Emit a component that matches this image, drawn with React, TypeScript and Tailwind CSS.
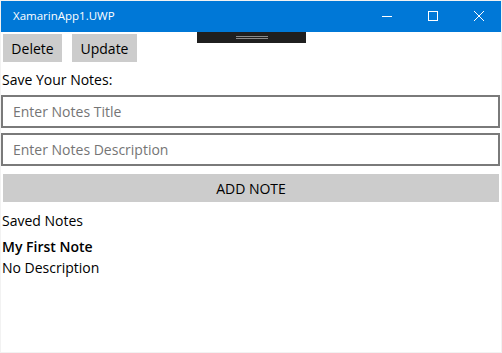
import React from 'react';

// タイトルバーのボタン
const TitleButtons: React.FC = () => (
  <div className="flex h-full">
    <div className="w-[46px] h-full flex items-center justify-center">
      <svg width="10" height="10" viewBox="0 0 10 10"><path d="M0 5.5h10" stroke="white" strokeWidth="1" /></svg>
    </div>
    <div className="w-[46px] h-full flex items-center justify-center">
      <svg width="10" height="10" viewBox="0 0 10 10"><rect x="0.5" y="0.5" width="9" height="9" fill="none" stroke="white" strokeWidth="1" /></svg>
    </div>
    <div className="w-[46px] h-full flex items-center justify-center">
      <svg width="10" height="10" viewBox="0 0 10 10"><path d="M0 0L10 10M10 0L0 10" stroke="white" strokeWidth="1" /></svg>
    </div>
  </div>
);

const App: React.FC = () => {
  return (
    <div
      className="w-[502px] h-[353px] bg-white border border-[#f2f2f2] relative overflow-hidden text-black"
      style={{ fontFamily: '"Segoe UI", "Open Sans", "Noto Sans", sans-serif' }}
    >
      {/* タイトルバー */}
      <div className="h-8 bg-[#0078d7] flex items-center justify-between pl-[13px] -mx-px -mt-px">
        <span className="text-white text-[11.5px]">XamarinApp1.UWP</span>
        <TitleButtons />
      </div>

      {/* ツールバー (デバッグ用) */}
      <div className="absolute left-[196px] top-[31px] w-[109px] h-[11px] bg-[#1f1f1f] flex items-center justify-center">
        <div className="w-8 h-[3px] border-y border-[#8a8a8a]" />
      </div>

      <div>
        <div className="flex gap-[10px] pl-[2px] pt-[2px]">
          <button className="h-7 w-[59px] bg-[#cccccc] text-[14px]">Delete</button>
          <button className="h-7 w-[65px] bg-[#cccccc] text-[14px]">Update</button>
        </div>

        <p className="text-[14px] mt-[8px] pl-[1px] leading-5">Save Your Notes:</p>

        <input
          className="mt-[5px] block w-[499px] h-[33px] border-2 border-[#7a7a7a] px-[10px] text-[14px] placeholder:text-[#757575] outline-none"
          placeholder="Enter Notes Title"
        />
        <input
          className="mt-[5px] block w-[499px] h-[33px] border-2 border-[#7a7a7a] px-[10px] text-[14px] placeholder:text-[#757575] outline-none"
          placeholder="Enter Notes Description"
        />

        <button className="mt-2 ml-[2px] block w-[496px] h-7 bg-[#cccccc] text-[14px]">ADD NOTE</button>

        <p className="text-[14px] mt-[9px] pl-[1px] leading-5">Saved Notes</p>
        <p className="text-[14px] font-semibold mt-[6px] pl-[1px] leading-5">My First Note</p>
        <p className="text-[14px] mt-[1px] pl-[1px] leading-5">No Description</p>
      </div>
    </div>
  );
};

export default App;
